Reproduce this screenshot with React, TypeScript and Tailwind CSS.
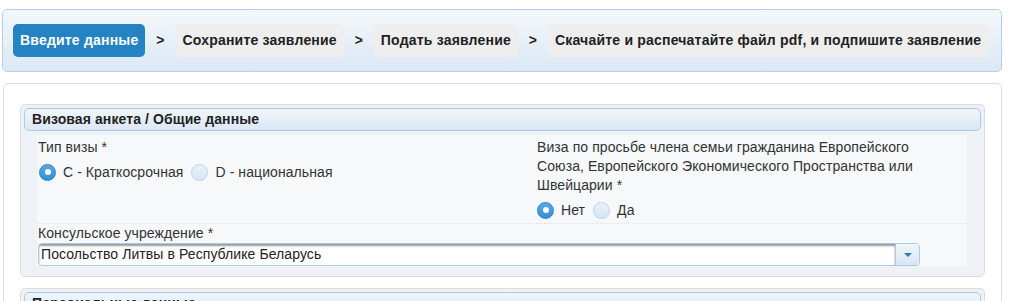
const steps = [
  { label: "Введите данные", active: true },
  { label: "Сохраните заявление", active: false },
  { label: "Подать заявление", active: false },
  { label: "Скачайте и распечатайте файл pdf, и подпишите заявление", active: false },
];

function Radio({ checked, label }: { checked: boolean; label: string }) {
  return (
    <label className="flex items-center">
      <span
        className={`flex h-[17px] w-[17px] items-center justify-center rounded-full border ${
          checked
            ? "border-[#2f86c9] bg-gradient-to-b from-[#53a9e8] to-[#338fd6]"
            : "border-[#bcd3ea] bg-gradient-to-b from-[#e8f1fa] to-[#d6e6f5]"
        }`}
      >
        {checked && <span className="h-[6px] w-[6px] rounded-full bg-white" />}
      </span>
      <span className="ml-[7px] mr-[8px] text-[#333]">{label}</span>
    </label>
  );
}

function SectionHeader({ title }: { title: string }) {
  return (
    <div className="flex h-[23px] items-center rounded-[5px] border border-[#a9cbe6] bg-gradient-to-b from-[#f0f5fa] to-[#dbe8f5] pl-[7px] font-bold tracking-[0.1px] text-[#222]">
      {title}
    </div>
  );
}

export default function App() {
  return (
    <div className="min-h-screen bg-white pt-[9px] font-['Liberation_Sans',Arial,sans-serif] text-[14px] leading-[19px] tracking-[0.08px] text-[#222]">
      {/* Steps */}
      <div className="ml-[2px] flex w-[1000px] items-center rounded-[5px] border border-[#b3d1ec] bg-gradient-to-b from-[#f4f7fa] to-[#dbe8f5] px-[10px] py-[14px]">
        {steps.map((step, i) => (
          <div key={step.label} className="flex items-center">
            {i > 0 && <span className="w-[30px] text-center font-bold">&gt;</span>}
            <div
              className={`flex h-[33px] items-center rounded-[5px] px-[7px] font-bold tracking-[0.2px] ${
                step.active ? "bg-[#2383c3] text-white" : "bg-[#eeeeee] text-[#222]"
              }`}
            >
              {step.label}
            </div>
          </div>
        ))}
      </div>

      {/* Form panel */}
      <div className="ml-[3px] mt-[11px] w-[999px] rounded-[5px] border border-[#dddddd] px-[16px] pt-[20px] pb-[16px]">
        <div className="rounded-[5px] border border-[#dddddd] bg-[#eef2f6] p-[3px]">
          <SectionHeader title="Визовая анкета / Общие данные" />
          <div className="mb-[7px] ml-[13px] mr-[14px] mt-[4px] bg-[#f6f8fa]">
            <div className="flex border-b border-dotted border-[#dfe4e9] pb-[4px] pt-[3px]">
              <div className="w-[500px] pl-[1px]">
                <div className="text-[#333]">Тип визы *</div>
                <div className="mt-[6px] flex h-[18px] items-center pl-[1px]">
                  <Radio checked label="C - Краткосрочная" />
                  <Radio checked={false} label="D - национальная" />
                </div>
              </div>
              <div className="flex-1">
                <div className="w-[390px] text-[#333]">
                  Виза по просьбе члена семьи гражданина Европейского Союза, Европейского
                  Экономического Пространства или Швейцарии *
                </div>
                <div className="mt-[6px] flex h-[18px] items-center">
                  <Radio checked label="Нет" />
                  <Radio checked={false} label="Да" />
                </div>
              </div>
            </div>
            <div className="pl-[1px]">
              <div className="text-[#333]">Консульское учреждение *</div>
              <div className="flex h-[23px] w-[882px] overflow-hidden rounded-[4px] border border-[#a9cbe6] bg-white">
                <div className="flex flex-1 items-center pl-[2px] text-[#222] shadow-[inset_0_2px_2px_rgba(0,0,0,0.4)]">
                  Посольство Литвы в Республике Беларусь
                </div>
                <div className="flex w-[24px] items-center justify-center border-l border-[#a9cbe6] bg-gradient-to-b from-[#eef5fb] to-[#d8e7f5]">
                  <span className="h-0 w-0 border-x-[4px] border-t-[4px] border-x-transparent border-t-[#3a78ad]" />
                </div>
              </div>
            </div>
          </div>
        </div>

        <div className="mt-[11px] rounded-[5px] border border-[#dddddd] bg-[#eef2f6] p-[3px]">
          <SectionHeader title="Персональные данные" />
          <div className="h-[120px]" />
        </div>
      </div>
    </div>
  );
}
